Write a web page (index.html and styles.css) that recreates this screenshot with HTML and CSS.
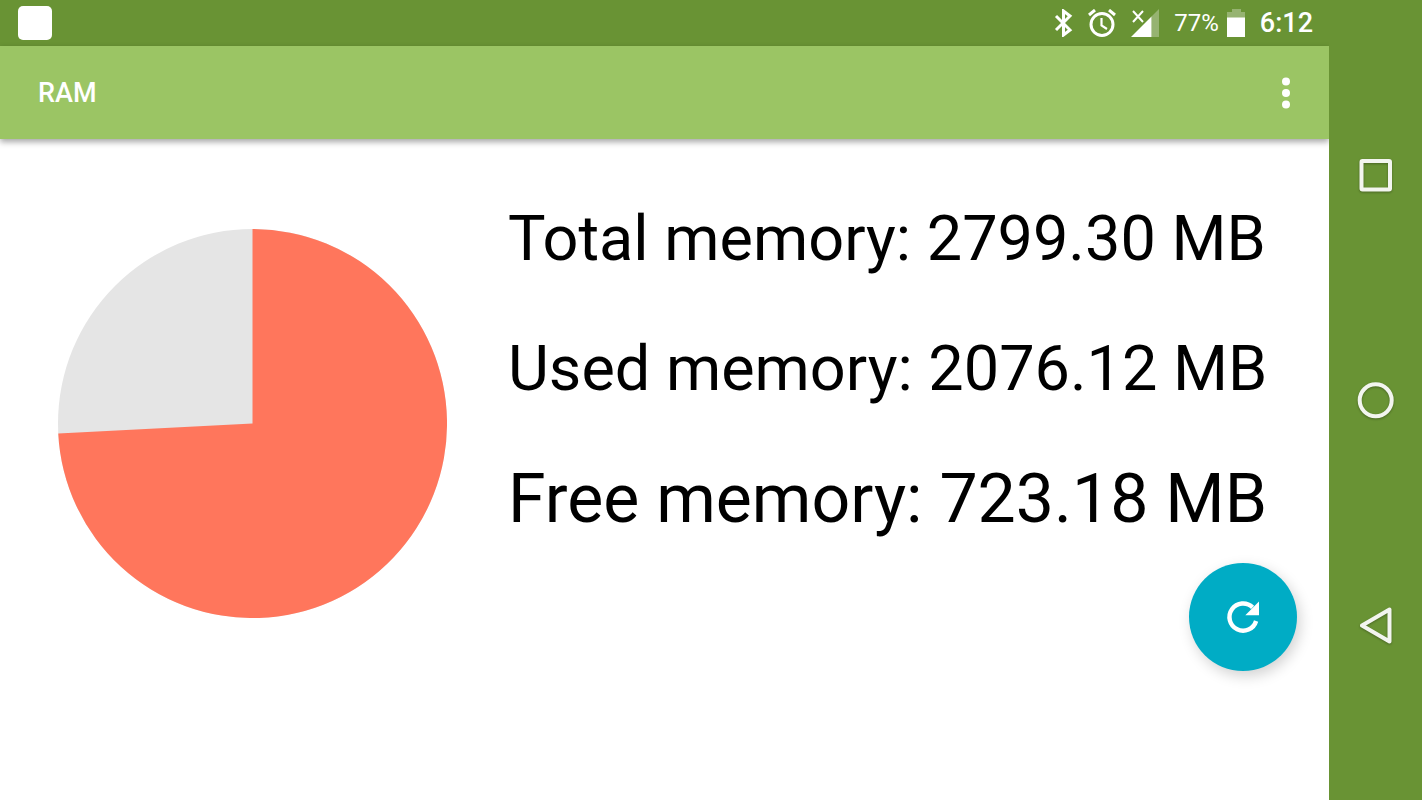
FILE: index.html
```html
<!DOCTYPE html>
<html lang="en">
<head>
  <meta charset="UTF-8" />
  <meta name="viewport" content="width=device-width, initial-scale=1.0"/>
  <title>RAM</title>
  <link rel="stylesheet" href="styles.css">
</head>

<body>
  <div class="screen">
    <div class="statusbar">
      <div class="notification"></div>
      <div class="status-icons">
        <svg class="bluetooth" width="20" height="28" viewBox="0 0 20 28" fill="none" stroke="#fff" stroke-width="3">
          <path d="M3 7l14 14-6.500 5V2l6.500 5L3 21"/>
        </svg>
        <svg class="alarm" width="28" height="28" viewBox="0 0 28 28" fill="none" stroke="#fff" stroke-width="3">
          <circle cx="14" cy="15.500" r="11"/>
          <path d="M1 6l6-5M27 6l-6-5"/>
          <path d="M13.500 9v7.500l5.500 3.500" stroke-width="2.200"/>
        </svg>
        <svg class="signal" width="28" height="28" viewBox="0 0 28 28">
          <path d="M28 0v28H20.500V7.500z" fill="#fff" opacity="0.3"/>
          <path d="M20.500 7.500V28H0z" fill="#fff"/>
          <path d="M2 2l10 11M12 2L2 13" stroke="#fff" stroke-width="2"/>
        </svg>
        <span class="percent">77%</span>
        <svg class="battery" width="18" height="28" viewBox="0 0 18 28">
          <path d="M0 3h5V0h9v3h4v6H0z" fill="#fff" opacity="0.3"/>
          <path d="M0 8.500h18V28H0z" fill="#fff"/>
        </svg>
        <span class="clock">6:12</span>
      </div>
    </div>

    <header class="appbar">
      <h1>RAM</h1>
      <button class="menu" aria-label="More options">
        <svg width="10" height="32" viewBox="0 0 10 32" fill="#fff">
          <circle cx="5" cy="4.500" r="4"/>
          <circle cx="5" cy="16" r="4"/>
          <circle cx="5" cy="27.500" r="4"/>
        </svg>
      </button>
    </header>

    <main class="content">
      <div class="chart">
        <svg class="pie" viewBox="-100 -100 200 200">
          <circle r="100" fill="#e5e5e5"/>
          <path d="M0 0V-100A100 100 0 1 1 -99.870 5.100z" fill="#ff765c"/>
        </svg>
      </div>
      <div class="memory">
        <p>Total memory: 2799.30 MB</p>
        <p>Used memory: 2076.12 MB</p>
        <p class="free">Free memory: 723.18 MB</p>
      </div>
      <button class="refresh" aria-label="Refresh">
        <svg width="48" height="48" viewBox="0 0 48 48">
          <path d="M33.600 14.400A13.600 13.600 0 1 0 37.100 28" fill="none" stroke="#fff" stroke-width="4.400"/>
          <path d="M40 8.600v13.700H26.300z" fill="#fff"/>
        </svg>
      </button>
    </main>
  </div>

  <nav class="navbar">
    <button aria-label="Recent apps">
      <svg width="40" height="40" viewBox="0 0 40 40">
        <rect x="5.500" y="6" width="28.500" height="28.500" rx="1"/>
      </svg>
    </button>
    <button aria-label="Home">
      <svg width="40" height="40" viewBox="0 0 40 40">
        <circle cx="19.700" cy="20.300" r="16"/>
      </svg>
    </button>
    <button aria-label="Back">
      <svg width="40" height="40" viewBox="0 0 40 40">
        <path d="M33.500 4.500v32L6 20.500z"/>
      </svg>
    </button>
  </nav>
</body>
</html>
```
FILE: styles.css
```css
* {margin: 0; padding: 0; box-sizing: border-box;}
body {
  display: flex;
  min-height: 100vh;
  font-family: Roboto, sans-serif;
  background: #fff;
  color: #000;
}
button {
  border: none;
  background: none;
  cursor: pointer;
}
svg {
  display: block;
}

.screen {
  flex: 1;
  display: flex;
  flex-direction: column;
}

.statusbar {
  height: 46px;
  padding: 0 16px 0 18px;
  display: flex;
  justify-content: space-between;
  align-items: center;
  background: #699334;
  color: #fff;
}
.notification {
  width: 34px;
  height: 34px;
  border-radius: 5px;
  background: #fff;
}
.status-icons {
  display: flex;
  align-items: center;
  gap: 15px;
}
.percent {
  margin-right: -7px;
  font-size: 24px;
}
.clock {
  font-size: 27px;
  font-weight: 500;
}

.appbar {
  position: relative;
  height: 93px;
  padding: 0 38px;
  display: flex;
  justify-content: space-between;
  align-items: center;
  background: #9bc564;
  color: #fff;
  box-shadow: 0 3px 6px rgba(0, 0, 0, 0.35);
}
.appbar h1 {
  font-size: 27px;
  font-weight: 500;
}

.content {
  position: relative;
  flex: 1;
  display: flex;
  align-items: flex-start;
  padding-top: 35px;
}
.chart {
  width: 38%;
  padding: 55px 58px 0;
}
.pie {
  width: 100%;
}
.memory {
  flex: 1;
  font-size: 63px;
  line-height: 130px;
  padding-left: 3px;
  white-space: nowrap;
}
.memory .free {
  font-size: 68px;
}

.refresh {
  position: absolute;
  right: 32px;
  bottom: 129px;
  width: 108px;
  height: 108px;
  border-radius: 50%;
  display: flex;
  justify-content: center;
  align-items: center;
  background: #00acc5;
  box-shadow: 3px 5px 14px rgba(0, 0, 0, 0.18);
}

.navbar {
  position: relative;
  width: 93px;
  padding: 62px 0;
  display: flex;
  flex-direction: column;
  background: #699334;
}
.navbar button {
  flex: 1;
  display: flex;
  justify-content: center;
  align-items: center;
}
.navbar svg {
  fill: none;
  stroke: #f3f5ef;
  stroke-width: 4;
  stroke-linejoin: round;
  filter: drop-shadow(0 1px 1px rgba(0, 0, 0, 0.3));
}
```
